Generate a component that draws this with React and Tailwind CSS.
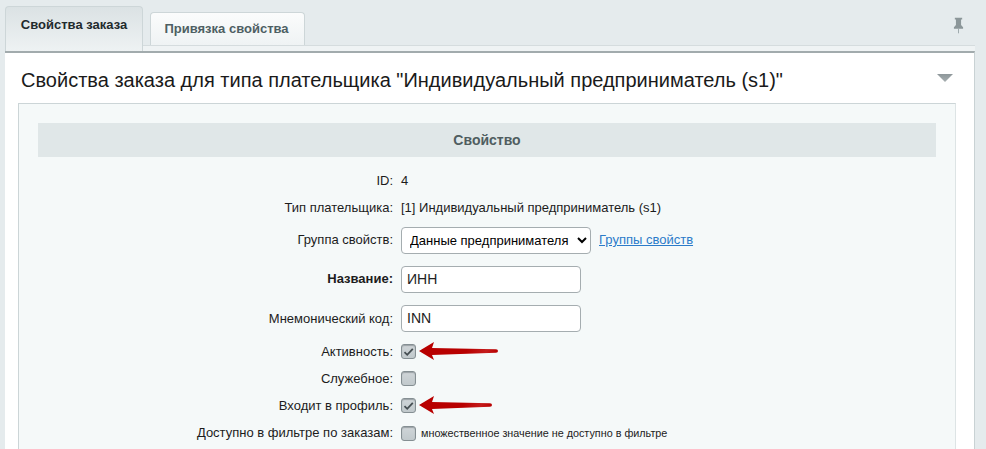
const rowBase = "flex items-center";

function Check({ checked }) {
  return (
    <span className="w-[15px] h-[15px] shrink-0 rounded-[3px] border border-[#858f93] bg-gradient-to-b from-[#cfd5d8] to-[#c1c9cc] shadow-[inset_0_1px_1px_rgba(90,100,105,0.45)] flex items-center justify-center">
      {checked && (
        <svg width="11" height="10" viewBox="0 0 11 10" fill="none">
          <path d="M1.5 5.2 L4.2 7.8 L9.8 1.8" stroke="#454e52" strokeWidth="1.8" />
        </svg>
      )}
    </span>
  );
}

function Row({ h, label, bold, children }) {
  return (
    <div className={rowBase} style={{ height: h }}>
      <div className={`w-[355px] shrink-0 text-right text-[13px] text-[#1c1c1c] ${bold ? "font-bold" : ""}`}>{label}</div>
      <div className="ml-2 flex items-center text-[13px] text-[#1c1c1c]">{children}</div>
    </div>
  );
}

function Arrow({ className, width }) {
  const e = width - 1;
  return (
    <svg className={`absolute ${className}`} width={width} height="20" viewBox={`0 0 ${width} 20`}>
      <defs>
        <linearGradient id={`g${width}`} x1="0" x2="1" y1="0" y2="0">
          <stop offset="0" stopColor="#b80000" />
          <stop offset="0.6" stopColor="#b80000" />
          <stop offset="0.85" stopColor="#c41c1c" />
          <stop offset="1" stopColor="#b80000" />
        </linearGradient>
      </defs>
      <path
        d={`M0 10 L15 1 L13 7 L${e - 2} 8.2 Q${e} 8.4 ${e} 10 Q${e} 11.6 ${e - 2} 11.8 L13 14 L15 19 Z`}
        fill={`url(#g${width})`}
      />
    </svg>
  );
}

export default function App() {
  return (
    <div className="relative w-[986px] h-[449px] overflow-hidden bg-[#e5ebed] font-['Liberation_Sans',Arial,sans-serif]">
      <div className="flex items-end pl-[5px] pr-[11px] pt-[6px] h-[45px]">
        <div className="w-[138px] flex items-center justify-center rounded-t-[4px] border border-b-0 border-[#cdd6d8] bg-gradient-to-b from-[#dbe2e4] to-[#eef2f3] text-[13px] font-bold text-[#1f2a2d] relative z-10 -mb-[6px] h-[45px] pb-[8px]">
          Свойства заказа
        </div>
        <div className="ml-[7px] w-[155px] h-[33px] flex items-center justify-center rounded-t-[4px] border border-b-0 border-[#cdd6d8] bg-gradient-to-b from-[#fbfcfc] to-[#eff3f4] text-[13px] font-bold text-[#4e5f63] pr-[2px]">
          Привязка свойства
        </div>
        <div className="flex-1 self-stretch flex justify-end pr-[11px]">
          <svg className="mt-[11px]" width="11" height="17" viewBox="0 0 12 17">
            <path d="M2 0 H10 V2 H8.8 V8 L11 10.5 V12 H1 V10.5 L3.2 8 V2 H2 Z" fill="#8b9699" />
            <rect x="5.5" y="12" width="1" height="5" fill="#9aa5a8" />
          </svg>
        </div>
      </div>

      <div className="ml-[5px] w-[970px] h-[6px] bg-[#eff3f4] border-t border-[#d5dcde]" />

      <div className="ml-[5px] w-[970px] h-[398px] bg-white border-t-2 border-[#a2abad] border-r border-r-[#c9d2d4] pl-[13px] pr-[18px]">
        <div className="h-[50px] flex items-center justify-between">
          <h1 className="pl-[3px] pt-[3px] text-[20px] font-normal text-[#1a1a1a]">
            Свойства заказа для типа плательщика "Индивидуальный предприниматель (s1)"
          </h1>
          <div className="mr-[3px] w-[16px] h-[8px] bg-gradient-to-b from-[#8e979a] to-[#a7afb1] [clip-path:polygon(0_0,100%_0,50%_100%)]" />
        </div>
        <div className="w-[938px] h-[360px] border border-b-0 border-[#ccd5d7] border-r-[#dde4e5] bg-[#f5f9f9] px-[19px] pt-[19px]">
          <div className="h-[34px] bg-[#e0e7e8] flex items-center justify-center text-[14px] font-bold text-[#4f5d60]">
            Свойство
          </div>
          <div className="mt-[10px]">
            <Row h={27} label="ID:">4</Row>
            <Row h={27} label="Тип плательщика:">[1] Индивидуальный предприниматель (s1)</Row>
            <Row h={38} label="Группа свойств:">
              <select className="w-[190px] h-[27px] rounded-[4px] border border-[#a5adb0] bg-white pl-[4px] text-[13px] text-black font-['Liberation_Sans',Arial,sans-serif]">
                <option>Данные предпринимателя</option>
              </select>
              <a href="#" className="ml-2 text-[#2b7bc9] underline text-[13px]">Группы свойств</a>
            </Row>
            <Row h={40} label="Название:" bold>
              <div className="w-[180px] h-[27px] rounded-[4px] border border-[#a5adb0] bg-white pl-[5px] flex items-center text-[14px] text-[#222]">ИНН</div>
            </Row>
            <Row h={39} label="Мнемонический код:">
              <div className="w-[180px] h-[27px] rounded-[4px] border border-[#a5adb0] bg-white pl-[5px] flex items-center text-[14px] text-[#222]">INN</div>
            </Row>
            <Row h={27} label="Активность:"><Check checked /></Row>
            <Row h={27} label="Служебное:"><Check /></Row>
            <Row h={27} label="Входит в профиль:"><Check checked /></Row>
            <Row h={28} label="Доступно в фильтре по заказам:">
              <Check />
              <span className="ml-[5px] text-[10.8px] text-[#222]">множественное значение не доступно в фильтре</span>
            </Row>
          </div>
        </div>
      </div>

      <Arrow className="left-[419px] top-[341px]" width={80} />
      <Arrow className="left-[419px] top-[395px]" width={74} />
    </div>
  );
}
